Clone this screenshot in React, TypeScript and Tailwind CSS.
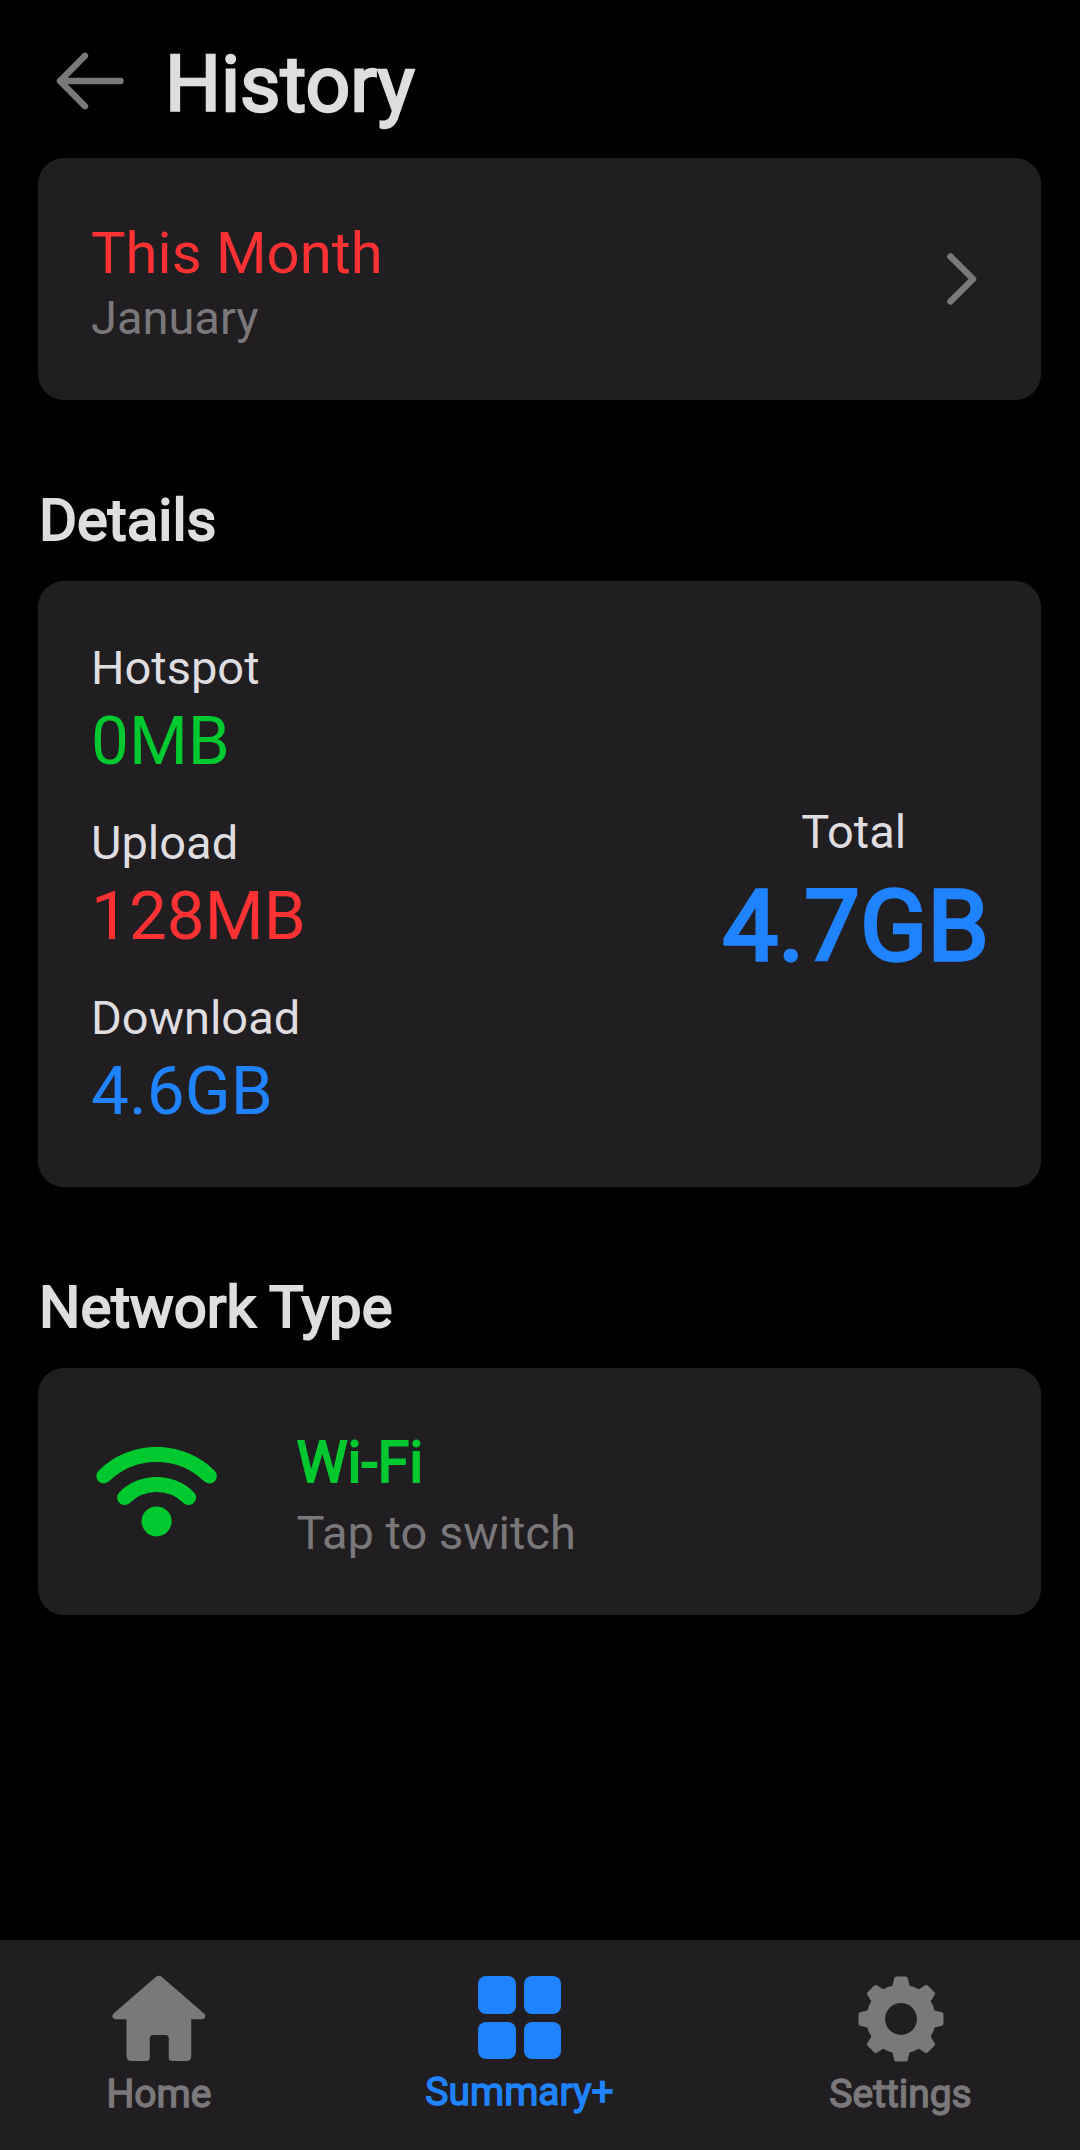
type Stat = {
    label: string;
    value: string;
    color: string;
};

const stats: Stat[] = [
    { label: "Hotspot", value: "0MB", color: "text-[#00c82f]" },
    { label: "Upload", value: "128MB", color: "text-[#ff3233]" },
    { label: "Download", value: "4.6GB", color: "text-[#1f83ff]" },
];

function BackIcon() {
    return (
        <svg width="68" height="58" viewBox="0 0 68 58" fill="none" stroke="currentColor" strokeWidth="6.4" strokeLinecap="round" strokeLinejoin="round">
            <path d="M64.5 29H4M29 3.8L4 29l25 25.2" />
        </svg>
    );
}

function ChevronIcon() {
    return (
        <svg width="30" height="52" viewBox="0 0 30 52" fill="none" stroke="currentColor" strokeWidth="6.4" strokeLinecap="round" strokeLinejoin="round">
            <path d="M3.4 3.4L26 26 3.4 48.6" />
        </svg>
    );
}

function WifiIcon() {
    return (
        <svg width="122" height="90" viewBox="0 0 122 90" fill="none" stroke="currentColor" strokeWidth="15" strokeLinecap="round">
            <path d="M7.8 29a75.3 75.3 0 0 1 105.6 0" />
            <path d="M28.600 50.600a45.900 45.900 0 0 1 64 0" />
            <circle cx="60.6" cy="74.4" r="15" fill="currentColor" stroke="none" />
        </svg>
    );
}

function HomeIcon() {
    return (
        <svg width="94" height="87" viewBox="0 0 94 87" fill="currentColor">
            <path d="M43.4 2.2q3.4-2.8 6.8 0L92 38.6c2.4 2.4 1.2 5.7-2.2 5.7H79.2V81q0 5-5 5H60.3q-3.5 0-3.5-3.5v-19q0-3.5-3.5-3.5h-12q-3.5 0-3.5 3.5v19q0 3.5-3.5 3.5H19.5q-5 0-5-5V44.3H3.8c-3.4 0-4.6-3.3-2.2-5.7z" />
        </svg>
    );
}

function SummaryIcon() {
    return (
        <div className="grid grid-cols-2 gap-2">
            <span className="size-[37.5px] rounded-lg bg-current" />
            <span className="size-[37.5px] rounded-lg bg-current" />
            <span className="size-[37.5px] rounded-lg bg-current" />
            <span className="size-[37.5px] rounded-lg bg-current" />
        </div>
    );
}

function SettingsIcon() {
    return (
        <svg width="86" height="86" viewBox="-43 -43 86 86" fill="currentColor" stroke="currentColor" strokeLinejoin="round">
            <circle r="25.2" fill="none" strokeWidth="18.6" />
            {[0, 45, 90, 135, 180, 225, 270, 315].map((angle) => (
                <path key={angle} d="M-4.8-40.5H4.8L7.2-30H-7.2z" strokeWidth="4" transform={`rotate(${angle})`} />
            ))}
        </svg>
    );
}

function SectionTitle(prop: { text: string }) {
    return (
        <h2 className="pl-px text-[58px] leading-[66px] [-webkit-text-stroke:2px]">
            {prop.text}
        </h2>
    );
}

function StatItem(prop: { stat: Stat }) {
    const { label, value, color } = prop.stat;
    return (
        <div>
            <p className="text-[47px] leading-[60px]">{label}</p>
            <p className={`mt-[3px] text-[67.5px] leading-[80px] ${color}`}>{value}</p>
        </div>
    );
}

export default function App() {
    return (
        <div className="flex h-[2150px] w-[1080px] flex-col bg-[#010002] font-['Roboto',sans-serif] text-[#dfdde0]">
            <header className="flex h-[158px] items-start pl-14">
                <button className="mt-[51.5px] text-[#7a787b]">
                    <BackIcon />
                </button>
                <h1 className="mt-[38px] ml-[41px] text-[78.5px] leading-[92px] [-webkit-text-stroke:2.5px]">History</h1>
            </header>

            <main className="flex flex-1 flex-col pr-[39px] pl-[38px]">
                <section className="flex h-[242px] items-center justify-between rounded-[26px] bg-[#201e20] pr-16 pl-[53px]">
                    <div className="pt-3">
                        <p className="text-[58px] leading-[60px] text-[#ff3233]">This Month</p>
                        <p className="mt-[5px] text-[47px] leading-[60px] text-[#7a787b]">January</p>
                    </div>
                    <span className="text-[#7a787b]">
                        <ChevronIcon />
                    </span>
                </section>

                <div className="mt-[87px] mb-7">
                    <SectionTitle text="Details" />
                </div>
                <section className="flex h-[606px] justify-between rounded-[26px] bg-[#201e20] pr-[52px] pl-[53px]">
                    <div className="flex flex-col gap-8 pt-[57px]">
                        {stats.map((stat) => (
                            <StatItem key={stat.label} stat={stat} />
                        ))}
                    </div>
                    <div className="pt-[221px] text-center">
                        <p className="pr-1 text-[47px] leading-[60px]">Total</p>
                        <p className="mt-[9px] text-[99px] leading-[110px] text-[#1f83ff] [-webkit-text-stroke:3.3px]">4.7GB</p>
                    </div>
                </section>

                <div className="mt-[87px] mb-7">
                    <SectionTitle text="Network Type" />
                </div>
                <section className="flex h-[247px] items-start rounded-[26px] bg-[#201e20] pl-[58px]">
                    <span className="mt-[79px] text-[#00c82f]">
                        <WifiIcon />
                    </span>
                    <div className="mt-[65px] ml-[78.5px]">
                        <p className="text-[57.5px] leading-[60px] text-[#00c82f] [-webkit-text-stroke:2px]">Wi-Fi</p>
                        <p className="mt-[10px] text-[47px] leading-[60px] text-[#7a787b]">Tap to switch</p>
                    </div>
                </section>
            </main>

            <nav className="flex h-[210px] bg-[#201e20] text-[39px] leading-[46px] text-[#7a787b] [-webkit-text-stroke:1.4px]">
                <a className="flex w-[318px] flex-col items-center pt-[35px]">
                    <HomeIcon />
                    <span className="mt-[9px]">Home</span>
                </a>
                <a className="flex w-[403px] flex-col items-center pt-9 text-[#1f83ff]">
                    <SummaryIcon />
                    <span className="mt-[10px]">Summary+</span>
                </a>
                <a className="flex flex-1 flex-col items-center pt-[35.5px]">
                    <SettingsIcon />
                    <span className="mt-[9.5px]">Settings</span>
                </a>
            </nav>
        </div>
    );
}
